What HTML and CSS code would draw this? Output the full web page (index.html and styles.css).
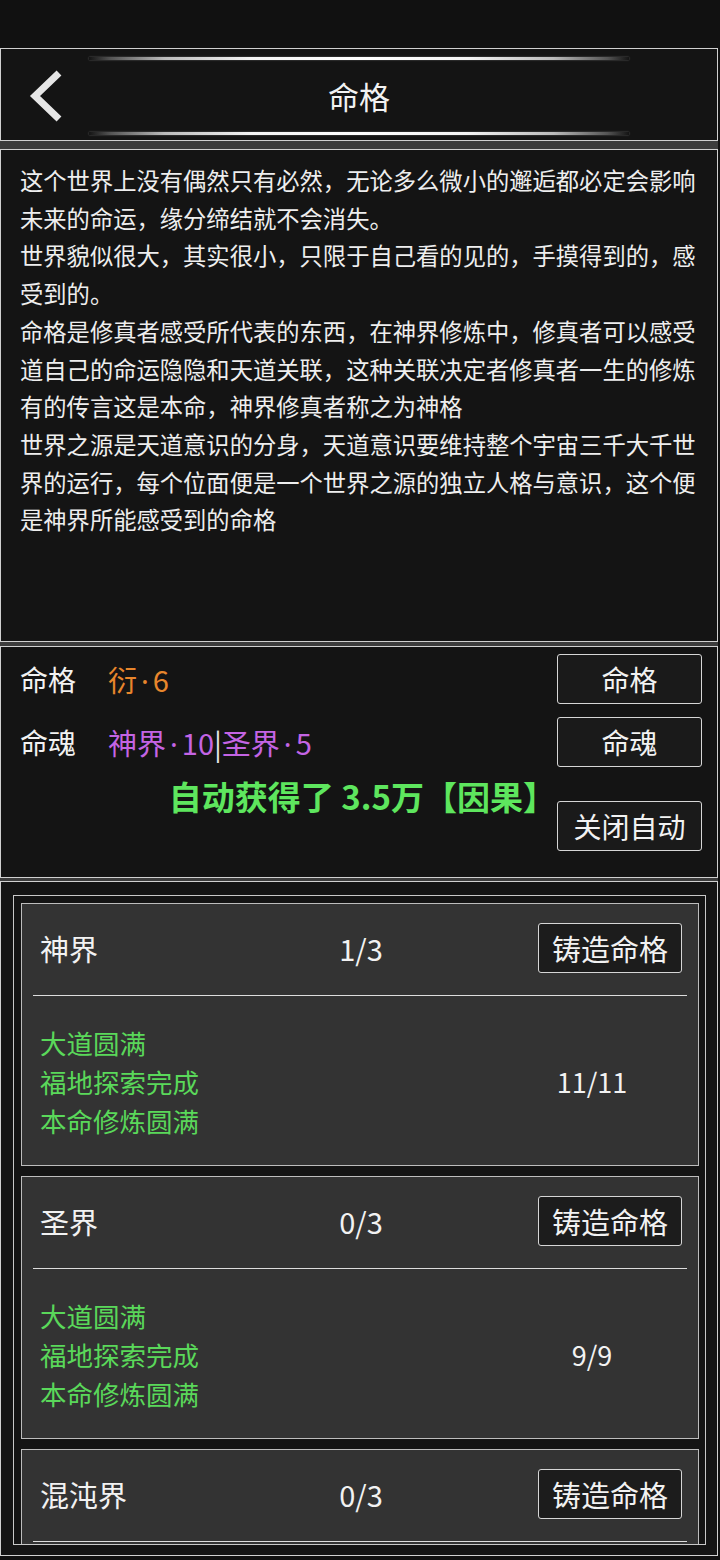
FILE: index.html
```html
<!DOCTYPE html>
<html lang="zh">
<head>
<meta charset="utf-8">
<title>命格</title>
<link rel="stylesheet" href="styles.css">
</head>
<body>
<div class="status"></div>
<div class="app">
  <header class="panel header">
    <div class="glow-line"></div>
    <div class="header-row">
      <div class="back">
        <svg width="36" height="52" viewBox="0 0 36 52"><polyline points="31,3 7,26 31,49" fill="none" stroke="#e6e6e6" stroke-width="7"/></svg>
      </div>
      <h1 class="title">命格</h1>
      <div></div>
    </div>
    <div class="glow-line"></div>
  </header>
  <div class="strip strip-8"></div>
  <section class="panel story">
    <p>这个世界上没有偶然只有必然，无论多么微小的邂逅都必定会影响未来的命运，缘分缔结就不会消失。</p>
    <p>世界貌似很大，其实很小，只限于自己看的见的，手摸得到的，感受到的。</p>
    <p>命格是修真者感受所代表的东西，在神界修炼中，修真者可以感受道自己的命运隐隐和天道关联，这种关联决定者修真者一生的修炼有的传言这是本命，神界修真者称之为神格</p>
    <p>世界之源是天道意识的分身，天道意识要维持整个宇宙三千大千世界的运行，每个位面便是一个世界之源的独立人格与意识，这个便是神界所能感受到的命格</p>
  </section>
  <div class="strip strip-4"></div>
  <section class="panel info">
    <div class="info-left">
      <div class="info-row"><span class="label">命格</span><span class="orange">衍<span class="dot">·</span>6</span></div>
      <div class="info-row"><span class="label">命魂</span><span class="purple">神界<span class="dot">·</span>10</span><span class="sep">|</span><span class="purple">圣界<span class="dot">·</span>5</span></div>
      <div class="auto-msg">自动获得了 3.5万【因果】</div>
    </div>
    <div class="info-buttons">
      <div class="btn">命格</div>
      <div class="btn">命魂</div>
      <div class="btn btn-gap">关闭自动</div>
    </div>
  </section>
  <div class="strip strip-3"></div>
  <section class="panel list">
    <div class="list-box">
      <div class="card">
        <div class="card-head"><span>神界</span><span>1/3</span><div class="btn card-btn">铸造命格</div></div>
        <div class="card-body">
          <div class="conds"><div>大道圆满</div><div>福地探索完成</div><div>本命修炼圆满</div></div>
          <div class="count">11/11</div>
        </div>
      </div>
      <div class="card">
        <div class="card-head"><span>圣界</span><span>0/3</span><div class="btn card-btn">铸造命格</div></div>
        <div class="card-body">
          <div class="conds"><div>大道圆满</div><div>福地探索完成</div><div>本命修炼圆满</div></div>
          <div class="count">9/9</div>
        </div>
      </div>
      <div class="card card-last">
        <div class="card-head"><span>混沌界</span><span>0/3</span><div class="btn card-btn">铸造命格</div></div>
      </div>
    </div>
  </section>
</div>
</body>
</html>
```

FILE: styles.css
```css
* { box-sizing: border-box; }
html, body { margin: 0; padding: 0; }
body {
  background: #111111;
  color: #f0f0f0;
  font-family: "Noto Sans CJK SC", "Noto Sans", sans-serif;
  width: 720px;
  height: 1560px;
  overflow: hidden;
}
.status { height: 48px; }
.app { width: 718px; }
.panel {
  border: 1px solid #d0d0d0;
  background: #141414;
}
.strip { background: #3c3c3c; }
.strip-8 { height: 8px; }
.strip-4 { height: 4px; }
.strip-3 { height: 3px; }

/* header */
.header {
  height: 93px;
  display: flex;
  flex-direction: column;
  align-items: center;
  padding-top: 8px;
}
.glow-line {
  width: 540px;
  height: 3px;
  background: linear-gradient(to right, rgba(255,255,255,0) 0%, #555 4%, #bbb 14%, #f4f4f4 30%, #ffffff 50%, #f4f4f4 70%, #bbb 86%, #555 96%, rgba(255,255,255,0) 100%);
  box-shadow: 0 0 2px rgba(255,255,255,0.35);
}
.header-row {
  width: 100%;
  height: 72px;
  display: grid;
  grid-template-columns: 1fr auto 1fr;
  align-items: center;
}
.back { padding-left: 27px; display: flex; align-items: center; }
.back svg { display: block; }
.title {
  margin: 0;
  font-size: 31px;
  font-weight: 400;
  line-height: 40px;
  color: #f2f2f2;
}

/* story */
.story {
  height: 493px;
  padding: 12px 19px 0 19px;
  font-size: 23.3px;
  line-height: 37.7px;
  color: #eeeeee;
}
.story p { margin: 0; }

/* info */
.info {
  display: grid;
  grid-template-columns: 1fr 145px;
  column-gap: 17px;
  padding: 7px 15px 26px 19px;
}
.info-left { display: flex; flex-direction: column; gap: 13px; }
.info-row {
  height: 50px;
  display: flex;
  align-items: center;
  font-size: 28px;
}
.label { width: 88px; color: #f2f2f2; }
.orange { color: #e8862c; font-size: 29px; }
.purple { color: #c464e4; font-size: 29px; }
.dot { font-family: "Noto Sans", sans-serif; padding: 0 4px; }
.sep { color: #e6e6e6; font-size: 29px; }
.auto-msg {
  margin-top: -5px;
  margin-right: -16px;
  text-align: right;
  font-size: 33px;
  font-weight: 700;
  line-height: 42px;
  color: #5ee65e;
}
.info-buttons { display: flex; flex-direction: column; gap: 13px; }
.btn {
  height: 50px;
  border: 1px solid #d6d6d6;
  border-radius: 3px;
  background: #1a1a1a;
  display: flex;
  align-items: center;
  justify-content: center;
  font-size: 28px;
  color: #f2f2f2;
}
.btn-gap { margin-top: 21px; }

/* list */
.list {
  height: 675px;
  padding: 13px 11px 10px 12px;
}
.list-box {
  height: 650px;
  border: 1px solid #c8c8c8;
  background: #141414;
  padding: 7px 6px 0 7px;
  overflow: hidden;
  display: flex;
  flex-direction: column;
  gap: 10px;
}
.card {
  flex: none;
  border: 1px solid #bdbdbd;
  background: #333333;
  padding: 0 11px;
}
.card-last { flex: 1 0 auto; border-bottom: none; }
.card-head {
  display: grid;
  grid-template-columns: 1fr auto 1fr;
  align-items: center;
  padding: 19px 5px 22px 7px;
  border-bottom: 1px solid #dddddd;
  font-size: 29px;
  color: #f2f2f2;
}
.card-btn {
  justify-self: end;
  width: 144px;
  font-size: 29px;
  background: #1c1c1c;
}
.card-body {
  display: grid;
  grid-template-columns: 1fr 190px;
  align-items: center;
  padding: 27px 0 25px 7px;
}
.conds {
  font-size: 26.5px;
  line-height: 39px;
  color: #5ad85a;
}
.count {
  text-align: center;
  font-size: 27px;
  color: #f2f2f2;
}
```
